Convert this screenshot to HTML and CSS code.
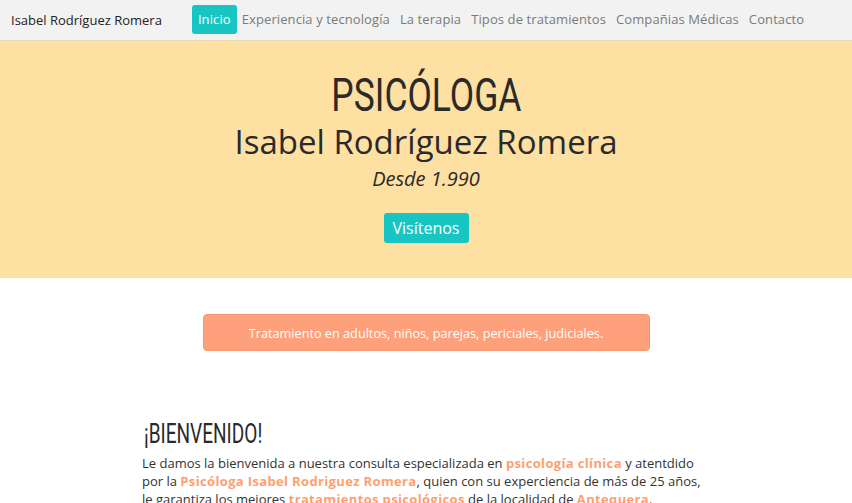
FILE: index.html
```html
<!DOCTYPE html>
<html lang="es">
<head>
<meta charset="utf-8">
<title>Psicóloga Isabel Rodríguez Romera</title>
<link rel="stylesheet" href="styles.css">
</head>
<body>
<nav class="navbar">
  <a class="brand" href="#">Isabel Rodríguez Romera</a>
  <ul class="nav">
    <li><a class="nav-link active" href="#">Inicio</a></li>
    <li><a class="nav-link" href="#">Experiencia y tecnología</a></li>
    <li><a class="nav-link" href="#">La terapia</a></li>
    <li><a class="nav-link" href="#">Tipos de tratamientos</a></li>
    <li><a class="nav-link" href="#">Compañias Médicas</a></li>
    <li><a class="nav-link" href="#">Contacto</a></li>
  </ul>
</nav>
<header class="hero">
  <h1 class="hero-title">PSICÓLOGA</h1>
  <h2 class="hero-name">Isabel Rodríguez Romera</h2>
  <p class="hero-since">Desde 1.990</p>
  <a class="btn" href="#">Visítenos</a>
</header>
<main class="main">
  <div class="alert">Tratamiento en adultos, niños, parejas, periciales, judiciales.</div>
  <section class="welcome">
    <h3 class="welcome-title">¡BIENVENIDO!</h3>
    <p class="welcome-text">Le damos la bienvenida a nuestra consulta especializada en <strong>psicología clínica</strong> y atentdido por la <strong>Psicóloga Isabel Rodriguez Romera</strong>, quien con su experciencia de más de 25 años, le garantiza los mejores <strong>tratamientos psicológicos</strong> de la localidad de <strong>Antequera</strong>.</p>
  </section>
</main>
</body>
</html>
```
FILE: styles.css
```css
* { box-sizing: border-box; }
html, body { margin: 0; padding: 0; }
body {
  font-family: "Open Sans", "Noto Sans", sans-serif;
  color: #222;
  background: #fff;
}
a { text-decoration: none; }

.navbar {
  display: flex;
  align-items: center;
  height: 41px;
  padding: 0 11px 1px;
  background: #f2f2f2;
  border-bottom: 1px solid #ead8b0;
}
.brand {
  font-size: 13px;
  color: #222;
  margin-right: 30px;
}
.nav {
  display: flex;
  list-style: none;
  margin: 0;
  padding: 0;
}
.nav-link {
  display: block;
  font-size: 13px;
  letter-spacing: 0.1px;
  color: #7a7a7a;
  padding: 6px 5px;
  line-height: 17px;
  border-radius: 3px;
}
.nav-link.active {
  background: #17c5c2;
  color: #fff;
  padding: 6px 6px;
}

.hero {
  background: #ffe0a3;
  height: 237px;
  display: flex;
  flex-direction: column;
  align-items: center;
  padding-top: 27px;
}
.hero-title {
  margin: 0;
  font-family: Roboto, sans-serif;
  font-weight: 400;
  font-size: 46px;
  line-height: 54px;
  color: #2a2a2a;
  transform: scaleX(0.77);
}
.hero-name {
  margin: 0;
  font-weight: 400;
  font-size: 33px;
  line-height: 40px;
  color: #2a2a2a;
}
.hero-since {
  margin: 4px 0 0;
  font-style: italic;
  font-size: 20px;
  line-height: 26px;
  color: #2a2a2a;
}
.btn {
  margin-top: 21px;
  background: #17c5c2;
  color: #fff;
  font-size: 16px;
  line-height: 20px;
  padding: 5px 9px;
  border-radius: 3px;
}

.main {
  display: flex;
  flex-direction: column;
  align-items: center;
  padding-top: 36px;
}
.alert {
  width: 447px;
  height: 37px;
  display: flex;
  align-items: center;
  justify-content: center;
  background: #ffa07c;
  border: 1px solid #f59670;
  border-radius: 4px;
  color: #fff;
  font-size: 12.7px;
}
.welcome {
  width: 568px;
  margin-top: 67px;
}
.welcome-title {
  display: inline-block;
  margin: 0 0 4px 2px;
  font-family: Roboto, sans-serif;
  font-weight: 400;
  font-size: 28px;
  line-height: 32px;
  color: #2a2a2a;
  transform: scaleX(0.68);
  transform-origin: left center;
}
.welcome-text {
  margin: 0;
  font-size: 13px;
  line-height: 18px;
  color: #333;
}
.welcome-text strong {
  color: #ff9f6f;
  font-weight: 700;
  letter-spacing: 0.35px;
}
```
